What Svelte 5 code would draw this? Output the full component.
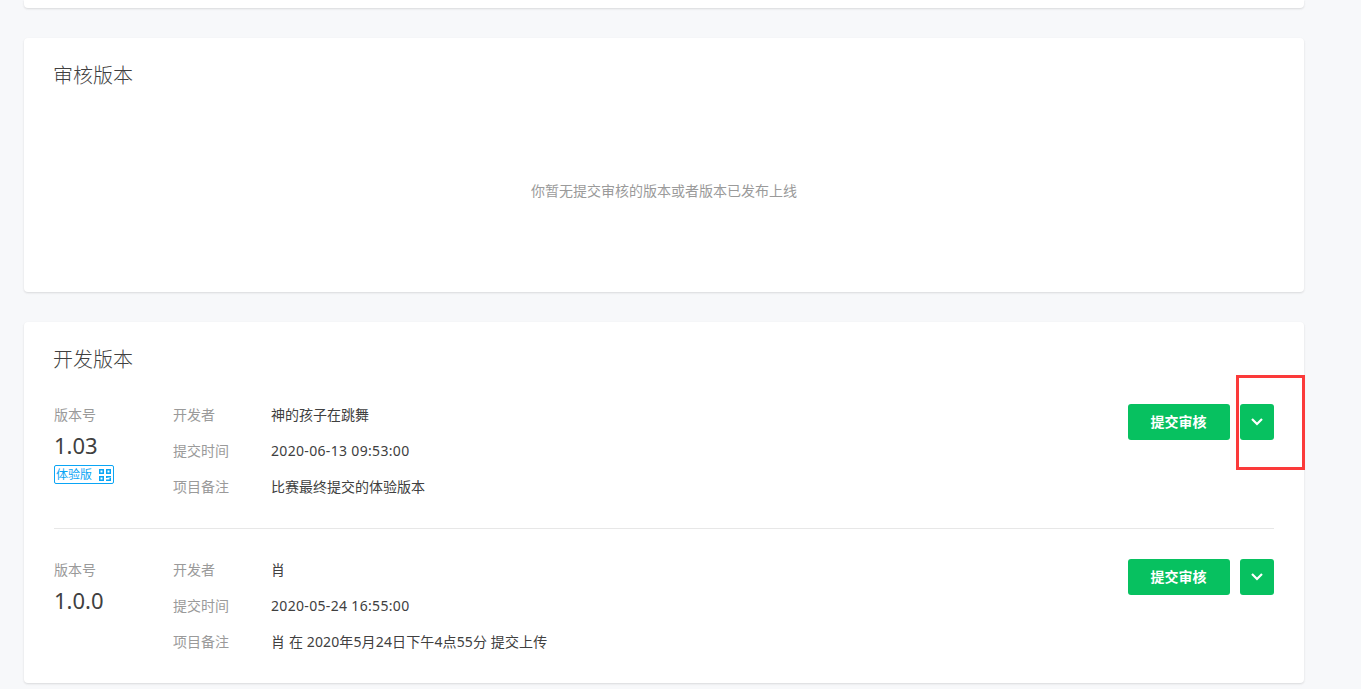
<script>
  const versions = [
    { no: '1.03', tag: true, dev: '神的孩子在跳舞', time: '2020-06-13 09:53:00', note: '比赛最终提交的体验版本', wide: false },
    { no: '1.0.0', tag: false, dev: '肖', time: '2020-05-24 16:55:00', note: '肖 在 2020年5月24日下午4点55分 提交上传', wide: true }
  ];
</script>

<div class="page">
  <section class="card stub"></section>

  <section class="card review">
    <h2>审核版本</h2>
    <div class="empty">你暂无提交审核的版本或者版本已发布上线</div>
  </section>

  <section class="card dev">
    <h2>开发版本</h2>
    {#each versions as v, i}
      <div class="row" class:divided={i > 0}>
        <div class="ver">
          <div class="label">版本号</div>
          <div class="no">{v.no}</div>
          {#if v.tag}
            <div class="tag">
              <span>体验版</span>
              <svg width="12" height="12" viewBox="0 0 12 12" fill="#0aa5f5">
                <path fill-rule="evenodd" d="M0 0h5v5H0zM1.500 1.500v2h2v-2zM7 0h5v5H7zM8.500 1.500v2h2v-2zM0 7h5v5H0zM1.500 8.500v2h2v-2z"/>
                <path d="M7 7h5v1.500H8.500V9H7zM10.500 9H12v3H7v-1.500h3.500z"/>
              </svg>
            </div>
          {/if}
        </div>
        <dl class="info">
          <div class="line"><dt>开发者</dt><dd>{v.dev}</dd></div>
          <div class="line"><dt>提交时间</dt><dd class="time">{v.time}</dd></div>
          <div class="line"><dt>项目备注</dt><dd class:wide={v.wide}>{v.note}</dd></div>
        </dl>
        <div class="actions">
          <button class="btn submit">提交审核</button>
          <button class="btn more" aria-label="更多">
            <svg width="12" height="8" viewBox="0 0 12 8" fill="none" stroke="#fff" stroke-width="2.200">
              <path d="M1 1l5 5 5-5"/>
            </svg>
          </button>
        </div>
      </div>
    {/each}
  </section>

  <div class="highlight"></div>
</div>

<style>
  :global(body) {
    margin: 0;
    background: #f7f8fa;
    overflow: hidden;
  }
  .page {
    position: relative;
    width: 1280px;
    height: 689px;
    padding-left: 24px;
    font-family: "Noto Sans", "Noto Sans CJK SC", sans-serif;
    font-size: 14px;
    color: #353535;
  }
  .card {
    background: #fff;
    border-radius: 4px;
    box-shadow: 0 1px 2px rgba(150, 150, 150, 0.3);
    margin-bottom: 30px;
    padding: 23px 30px 0;
    box-sizing: border-box;
  }
  .stub {
    height: 8px;
    padding: 0;
    border-radius: 0 0 4px 4px;
  }
  .review {
    height: 254px;
    display: flex;
    flex-direction: column;
  }
  .dev {
    height: 361px;
    margin-bottom: 0;
  }
  h2 {
    margin: 0 0 22px -1px;
    font-size: 20px;
    line-height: 30px;
    font-weight: 300;
    color: #404040;
  }
  .review h2 {
    margin-bottom: 0;
  }
  .empty {
    flex: 1;
    display: flex;
    align-items: center;
    justify-content: center;
    color: #9a9a9a;
    font-size: 14px;
    padding-bottom: 3px;
  }
  .row {
    display: flex;
    padding-bottom: 23px;
  }
  .row.divided {
    border-top: 1px solid #e7e7e7;
    padding-top: 23px;
  }
  .ver {
    width: 119px;
    flex: none;
  }
  .label {
    line-height: 36px;
    color: #9a9a9a;
    height: 36px;
  }
  .no {
    font-size: 22px;
    line-height: 26px;
    margin-top: -1px;
    color: #404040;
  }
  .tag {
    display: flex;
    align-items: center;
    justify-content: space-between;
    box-sizing: border-box;
    width: 60px;
    height: 19px;
    margin-top: 7px;
    padding: 0 0 0 1px;
    border: 1px solid #0aa5f5;
    border-radius: 2px;
    color: #0aa5f5;
    font-size: 12px;
    line-height: 17px;
  }
  .tag svg {
    margin: 1px 2px 0 0;
  }
  .info {
    flex: 1;
    margin: 0;
  }
  .line {
    display: flex;
    height: 36px;
    line-height: 36px;
  }
  dt {
    width: 98px;
    flex: none;
    color: #9a9a9a;
  }
  dd {
    margin: 0;
    color: #404040;
  }
  dd.time {
    letter-spacing: 0.33px;
  }
  dd.wide {
    letter-spacing: 0.13px;
  }
  .actions {
    display: flex;
    gap: 10px;
    margin-top: 7px;
    align-items: flex-start;
  }
  .btn {
    height: 36px;
    border: 0;
    border-radius: 3px;
    background: #07c160;
    color: #fff;
    font-family: inherit;
    font-size: 14px;
    font-weight: 700;
    padding: 0 1px 2px 0;
    display: flex;
    align-items: center;
    justify-content: center;
  }
  .submit {
    width: 102px;
  }
  .more {
    width: 34px;
    padding: 0;
  }
  .highlight {
    position: absolute;
    left: 1236px;
    top: 375px;
    width: 69px;
    height: 95px;
    box-sizing: border-box;
    border: 3px solid #fb3a3a;
  }
</style>
